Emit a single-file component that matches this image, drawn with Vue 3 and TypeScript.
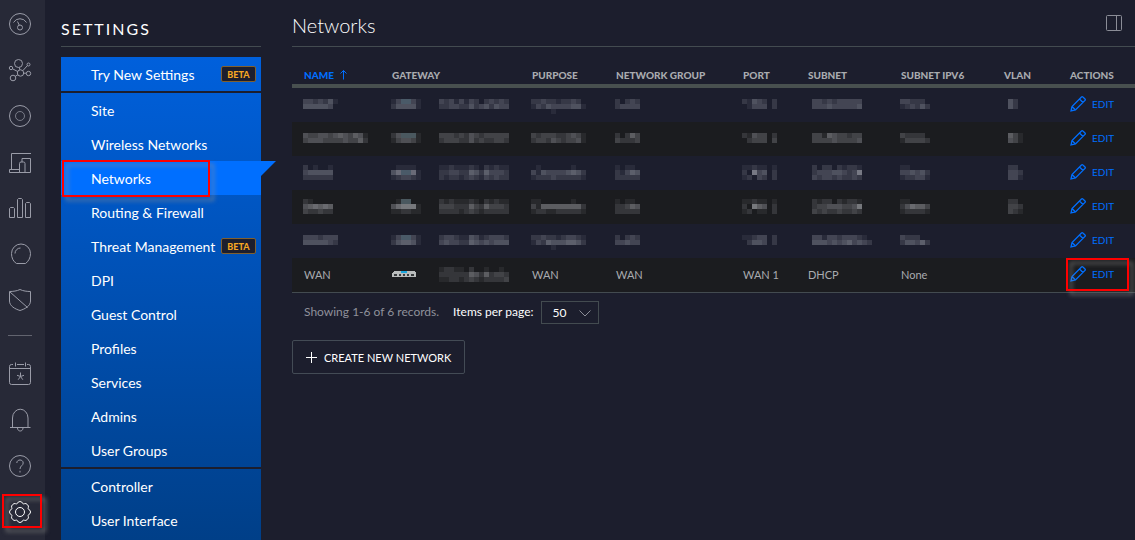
<script setup lang="ts">
import { ref } from 'vue'

interface MenuItem {
  label: string
  beta?: boolean
}

interface NetworkRow {
  name: string[]
  device: string[]
  address: string[]
  purpose: string[]
  group: string[]
  port: string[]
  subnet: string[]
  ipv6: string[]
  vlan: string[]
}

const active = ref('Networks')
const pageSize = ref('50')

const menu: MenuItem[][] = [
  [{ label: 'Try New Settings', beta: true }],
  [
    { label: 'Site' },
    { label: 'Wireless Networks' },
    { label: 'Networks' },
    { label: 'Routing & Firewall' },
    { label: 'Threat Management', beta: true },
    { label: 'DPI' },
    { label: 'Guest Control' },
    { label: 'Profiles' },
    { label: 'Services' },
    { label: 'Admins' },
    { label: 'User Groups' },
  ],
  [{ label: 'Controller' }, { label: 'User Interface' }],
]

const headings = ['Gateway', 'Purpose', 'Network Group', 'Port', 'Subnet', 'Subnet IPv6', 'VLAN', 'Actions']
const fields = ['purpose', 'group', 'port', 'subnet', 'ipv6', 'vlan'] as const

// Redacted values: each digit is the brightness of one block, "b" is a blue block.
const rows: NetworkRow[] = [
  {
    name: ['3323241', '4444430'],
    device: ['13bb31', '244441'],
    address: ['32313132023232', '22332242342433'],
    purpose: ['00000000000', '22322122320', '13243333441', '00001000000'],
    group: ['20232', '23333'],
    port: ['2143202', '0133302'],
    subnet: ['03323233333', '03334333334'],
    ipv6: ['332220', '123242'],
    vlan: ['042', '042'],
  },
  {
    name: ['4334434543541', '3444333343352'],
    device: ['24bbb1', '134431'],
    address: ['33323243233333', '23332242322332'],
    purpose: ['32333223431', '23324323341'],
    group: ['20253', '32223'],
    port: ['2143302', '0233303'],
    subnet: ['03315433233', '03333433334'],
    ipv6: ['322220', '133332'],
    vlan: ['0531', '0431'],
  },
  {
    name: ['201001', '344444', '222222'],
    device: ['011110', '46bb61', '123321'],
    address: ['11211121021211', '22332254253332', '21221232132322'],
    purpose: ['01000000100', '31433334542', '12223222221'],
    group: ['10110', '21354', '22222'],
    port: ['1121101', '2073402', '1203202'],
    subnet: ['02022021221', '02333443237', '03233232232'],
    ipv6: ['110000', '334342', '122331'],
    vlan: ['0220', '0332', '0331'],
  },
  {
    name: ['210000', '456565', '322322'],
    device: ['01bb00', '467771', '112211'],
    address: ['21211121021211', '33322253253332', '22221232122222'],
    purpose: ['11000000100', '31555555552', '12211222221'],
    group: ['10110', '22354', '22222'],
    port: ['1121101', '2075402', '1201102'],
    subnet: ['02122021221', '02334443347', '03232232232'],
    ipv6: ['110000', '246553', '122221'],
    vlan: ['0220', '0332', '0321'],
  },
  {
    name: ['3332333', '4444432'],
    device: ['13bb31', '245541'],
    address: ['23321143123332', '34332254343444'],
    purpose: ['00000000000', '22322123321', '13254445542', '00001000000'],
    group: ['20232', '33433'],
    port: ['1123302', '0244302'],
    subnet: ['0331332333210', '0444343453432'],
    ipv6: ['322200', '244352'],
    vlan: [],
  },
]
const wanAddress = ['12211020010010', '22222254252332', '11221232122223']
</script>

<template>
  <div class="app">
    <nav class="rail" aria-label="Main">
      <a href="#dashboard" aria-label="Dashboard">
        <svg viewBox="0 0 24 24"><circle cx="12" cy="12" r="10.5" /><path d="M5.5 10.5a7.5 7.5 0 0 1 13 0M9.5 9.5l1.8 3.8" /><circle cx="12" cy="15.5" r="2.5" /></svg>
      </a>
      <a href="#topology" aria-label="Topology">
        <svg viewBox="0 0 24 24"><circle cx="10.5" cy="5.5" r="4" /><circle cx="12.5" cy="15" r="3.2" /><circle cx="20.5" cy="15.5" r="2.2" /><circle cx="5" cy="20" r="2.8" /><circle cx="3" cy="10" r="1.7" /><circle cx="20.5" cy="6.5" r="1.5" /><path d="M11.3 9.4l.6 2.5M4.5 10.8l5.3 2.8M14.8 12.7l4.7-5.2M15.7 15.2h2.6M7.3 18.3l2.6-1.6" /></svg>
      </a>
      <a href="#map" aria-label="Map">
        <svg viewBox="0 0 24 24"><circle cx="12" cy="12" r="10.5" /><circle class="dim" cx="12" cy="12" r="4.5" /></svg>
      </a>
      <a href="#devices" aria-label="Devices">
        <svg viewBox="0 0 24 24"><path d="M3.500 19.500v-16h19.500M1.500 19.500h10v3h-10zM14 12V8.500h8.500v14h-5.500M11.500 13.500q0-1.500 1.500-1.500h2.500q1.500 0 1.500 1.500v9h-5.500z" /></svg>
      </a>
      <a href="#statistics" aria-label="Statistics">
        <svg viewBox="0 0 24 24"><path d="M1.500 21.500V12.500l1-1h3l1 1v9zM9.500 21.500V3.500l1-1h3l1 1v18zM17.500 21.500V7.500l1-1h3l1 1v14z" /></svg>
      </a>
      <a href="#insights" aria-label="Insights">
        <svg viewBox="0 0 24 24"><path d="M8.500 21.500C5 19.500 3.500 15.500 3.500 11.500a9.500 9.500 0 0 1 19 0c0 4-2 8-5 10zM7 11.500a5.500 5.500 0 0 1 5.500-5.500" /></svg>
      </a>
      <a href="#threats" aria-label="Threats">
        <svg viewBox="0 0 24 24"><path d="M12 1.500C9 3 5 3.500 1.500 3.500V13c0 5 5.500 8 10.500 9.500 5-1.500 10.500-4.500 10.500-9.500V3.500c-3.500 0-7.500-.5-10.500-2zM2 4l17.500 15.500" /></svg>
      </a>
      <hr />
      <a href="#events" aria-label="Events">
        <svg viewBox="0 0 24 24"><path d="M5 2.500H3.500q-2 0-2 2v16q0 2 2 2h17q2 0 2-2v-16q0-2-2-2H19M9 2.500h7M1.500 6.500h21M7.500.500v4M17.500.500v4M12.500 10.500v4M12.500 14.500l-3.500-1.200M12.500 14.500l3.500-1.200M12.500 14.500l-2.300 3.200M12.500 14.500l2.300 3.200" /></svg>
      </a>
      <a href="#alerts" aria-label="Alerts">
        <svg viewBox="0 0 24 24"><path d="M2 19.500h20.500M4.500 19.500V10a7.500 8.500 0 0 1 15.500 0v9.500M9.500 20c0 4 5.500 4 5.500 0" /></svg>
      </a>
      <a href="#help" aria-label="Help">
        <svg viewBox="0 0 24 24"><circle cx="12" cy="12" r="10.500" /><path d="M8.800 9c0-4 6.400-4 6.400 0 0 2.700-3.200 2.700-3.200 6M12 16.800v1.700" /></svg>
      </a>
      <a href="#settings" class="current" aria-label="Settings" aria-current="page">
        <svg viewBox="0 0 24 24"><path d="M9.500 3.300Q10 1.500 12 1.500T14.500 3.300Q15.200 4.200 16.400 3.700Q18 3 19.400 4.600Q21 6 20.300 7.600Q19.800 8.800 20.700 9.500Q22.500 10 22.500 12T20.700 14.500Q19.800 15.200 20.300 16.400Q21 18 19.400 19.400Q18 21 16.400 20.300Q15.200 19.800 14.500 20.700Q14 22.500 12 22.500T9.500 20.700Q8.800 19.800 7.600 20.300Q6 21 4.600 19.400Q3 18 3.700 16.400Q4.200 15.200 3.300 14.500Q1.500 14 1.500 12T3.300 9.500Q4.200 8.800 3.700 7.600Q3 6 4.600 4.600Q6 3 7.600 3.700Q8.800 4.200 9.500 3.300z" /><circle cx="12" cy="12" r="4.500" /></svg>
        <span class="mark mark-rail"></span>
      </a>
    </nav>

    <aside class="sidebar">
      <h2>SETTINGS</h2>
      <nav class="menu" aria-label="Settings">
        <ul v-for="(group, g) in menu" :key="g">
          <li v-for="item in group" :key="item.label">
            <a href="#" :class="{ active: item.label === active }" @click.prevent="active = item.label">
              {{ item.label }}<span v-if="item.beta" class="beta">BETA</span>
              <span v-if="item.label === 'Networks'" class="mark mark-menu"></span>
            </a>
          </li>
        </ul>
      </nav>
    </aside>

    <main>
      <header class="title">
        <h1>Networks</h1>
        <button type="button" aria-label="Toggle side panel">
          <svg viewBox="0 0 16 16"><rect x=".5" y=".5" width="15" height="15" rx="1" /><path d="M10.500.500v15" /></svg>
        </button>
      </header>

      <table>
        <colgroup>
          <col class="c-name" /><col class="c-device" /><col class="c-address" /><col class="c-purpose" /><col class="c-group" />
          <col class="c-port" /><col class="c-subnet" /><col class="c-ipv6" /><col class="c-vlan" /><col class="c-actions" />
        </colgroup>
        <thead>
          <tr>
            <th class="sorted" aria-sort="ascending">
              Name <svg class="arrow" viewBox="0 0 7 10"><path d="M3.500 9.500v-9M.5 3.500l3-3 3 3" /></svg>
            </th>
            <th v-for="(h, i) in headings" :key="h" :colspan="i === 0 ? 2 : 1">{{ h }}</th>
          </tr>
        </thead>
        <tbody>
          <tr v-for="(row, r) in rows" :key="r">
            <td v-for="field in (['name', 'device', 'address', ...fields] as (keyof NetworkRow)[])" :key="field">
              <svg
                v-if="row[field].length"
                class="mosaic"
                aria-hidden="true"
                :width="row[field][0].length * 5"
                :height="row[field].length * 5"
              >
                <template v-for="(line, y) in row[field]" :key="y">
                  <rect
                    v-for="(c, x) in line.split('')"
                    :key="x"
                    :x="x * 5"
                    :y="y * 5"
                    width="5"
                    height="5"
                    :class="{ blue: c === 'b' }"
                    :fill-opacity="c === 'b' ? 0.36 : Number(c) * 0.065"
                  />
                </template>
              </svg>
            </td>
            <td>
              <a href="#edit" class="edit">
                <svg viewBox="0 0 16 16"><path d="M1 15l1-4.500L11.500 1q.7-.7 1.400 0L15 3q.7.700 0 1.400L5.500 14zM2 10.500L5.500 14M9.500 3l3.500 3.500" /></svg>EDIT
              </a>
            </td>
          </tr>
          <tr>
            <td>WAN</td>
            <td>
              <svg class="device" viewBox="0 0 24 6" role="img" aria-label="Gateway">
                <path d="M2 0h20l2 2v4H0V2z" fill="#b9bcbc" />
                <path d="M9 0h6v2H9z" fill="#19a5dc" />
                <path d="M2 3h3v2H2zM7 3h2v2H7zM11 3h2v2h-2zM15 3h2v2h-2zM19 3h3v2h-3z" fill="#383b3d" />
              </svg>
            </td>
            <td>
              <svg class="mosaic" aria-hidden="true" width="70" height="15">
                <template v-for="(line, y) in wanAddress" :key="y">
                  <rect v-for="(c, x) in line.split('')" :key="x" :x="x * 5" :y="y * 5" width="5" height="5" :fill-opacity="Number(c) * 0.065" />
                </template>
              </svg>
            </td>
            <td>WAN</td>
            <td>WAN</td>
            <td>WAN 1</td>
            <td>DHCP</td>
            <td>None</td>
            <td></td>
            <td class="marked">
              <a href="#edit" class="edit">
                <svg viewBox="0 0 16 16"><path d="M1 15l1-4.500L11.500 1q.7-.7 1.400 0L15 3q.7.700 0 1.400L5.500 14zM2 10.500L5.500 14M9.500 3l3.500 3.500" /></svg>EDIT
              </a>
              <span class="mark mark-edit"></span>
            </td>
          </tr>
        </tbody>
      </table>

      <div class="pager">
        <span class="count">Showing 1-6 of 6 records.</span>
        <label for="page-size">Items per page:</label>
        <span class="select">
          <select id="page-size" v-model="pageSize">
            <option>50</option>
            <option>100</option>
          </select>
          <svg viewBox="0 0 12 7"><path d="M.5.500L6 6l5.500-5.500" /></svg>
        </span>
      </div>

      <button type="button" class="create">
        <svg viewBox="0 0 11 11"><path d="M5.500 0v11M0 5.500h11" /></svg>CREATE NEW NETWORK
      </button>
    </main>
  </div>
</template>

<style>
body {
  background: #1c1e2d;
}
</style>

<style scoped>
.app {
  display: flex;
  height: 100vh;
  overflow: hidden;
  background: #1c1e2d;
  color: #fff;
  font-family: Lato, "Open Sans", sans-serif;
}
a {
  color: inherit;
  text-decoration: none;
}
svg {
  display: block;
  fill: none;
  stroke: currentColor;
}
.mark {
  position: absolute;
  box-sizing: border-box;
  border: 2px solid #f00;
  filter: drop-shadow(4px 4px 2px rgba(145, 145, 140, 0.65));
  pointer-events: none;
}

.rail {
  flex: none;
  width: 45px;
  box-sizing: border-box;
  padding-top: 1px;
  background: #272937;
  color: #9a9ca8;
}
.rail a {
  position: relative;
  display: flex;
  align-items: center;
  height: 46px;
  padding-left: 8px;
}
.rail svg {
  width: 24px;
  height: 24px;
}
.rail .dim {
  opacity: 0.7;
}
.rail .current {
  color: #fff;
}
.rail hr {
  width: 24px;
  height: 1px;
  margin: 12px 0 15px 8px;
  border: 0;
  background: #62646f;
}
.mark-rail {
  left: 2px;
  top: 5px;
  width: 40px;
  height: 34px;
}

.sidebar {
  flex: none;
  display: flex;
  flex-direction: column;
  width: 200px;
  margin-left: 16px;
}
.sidebar h2 {
  margin: 0 0 10px;
  padding-top: 12px;
  border-bottom: 1px solid #434b50;
  font-size: 16px;
  font-weight: 400;
  line-height: 34px;
  letter-spacing: 2px;
}
.menu {
  flex: 1;
  background: linear-gradient(#0060dc, #003f88);
}
.menu ul {
  margin: 0;
  padding: 0;
  list-style: none;
}
.menu ul + ul {
  border-top: 2px solid #1c1e2d;
}
.menu a {
  position: relative;
  display: flex;
  align-items: center;
  justify-content: space-between;
  height: 34px;
  padding: 0 5px 0 30px;
  box-sizing: border-box;
  font-size: 14px;
  white-space: nowrap;
}
.menu .active {
  background: #006fff;
}
.menu .active::after {
  content: "";
  position: absolute;
  left: 100%;
  top: 0;
  border-top: 15px solid #006fff;
  border-right: 15px solid transparent;
}
.beta {
  box-sizing: border-box;
  width: 35px;
  height: 16px;
  margin-bottom: 1px;
  border: 1px solid #80602f;
  border-radius: 2px;
  background: #1c1e2d;
  color: #f5a623;
  font-size: 9px;
  font-weight: 900;
  line-height: 15px;
  text-align: center;
}
.mark-menu {
  left: 1px;
  top: -1px;
  width: 148px;
  height: 37px;
}

main {
  flex: 1;
  min-width: 0;
  margin-left: 31px;
}
.title {
  display: flex;
  align-items: center;
  justify-content: space-between;
  height: 46px;
  padding-right: 13px;
  border-bottom: 1px solid #434b50;
}
.title h1 {
  margin: 4px 0 0;
  font-size: 20px;
  font-weight: 300;
  line-height: 24px;
}
.title button {
  padding: 0;
  border: 0;
  background: none;
  color: #8b8d97;
}
.title button svg {
  width: 16px;
  height: 16px;
}

table {
  width: 100%;
  table-layout: fixed;
  border-collapse: separate;
  border-spacing: 0;
  border-bottom: 1px solid #434b50;
  color: #a9abaf;
  font-size: 11px;
}
.c-name { width: 88px; }
.c-device { width: 48px; }
.c-address { width: 92px; }
.c-purpose { width: 84px; }
.c-group { width: 127px; }
.c-port { width: 65px; }
.c-subnet { width: 93px; }
.c-ipv6 { width: 103px; }
.c-vlan { width: 66px; }
.c-actions { width: 77px; }
th {
  height: 41px;
  padding: 20px 0 0 12px;
  box-sizing: border-box;
  border-bottom: 4px solid #48504f;
  font-size: 10px;
  font-weight: 900;
  line-height: 17px;
  text-align: left;
  text-transform: uppercase;
  white-space: nowrap;
  vertical-align: top;
}
th.sorted {
  color: #006fff;
}
.arrow {
  display: inline-block;
  width: 7px;
  height: 10px;
  margin-left: 4px;
  vertical-align: -1px;
}
td {
  height: 34px;
  box-sizing: border-box;
  padding: 0 0 2px 12px;
  white-space: nowrap;
}
tbody tr:nth-child(even) {
  background: #1b1c1f;
}
.mosaic {
  margin-left: -1px;
  fill: #e4e6ee;
  stroke: none;
  shape-rendering: crispEdges;
}
.mosaic .blue {
  fill: #9fc4d4;
}
.device {
  width: 24px;
  height: 6px;
  stroke: none;
  shape-rendering: crispEdges;
}
.marked {
  position: relative;
}
.edit {
  display: flex;
  align-items: center;
  gap: 6px;
  color: #006fff;
  font-size: 10px;
}
.edit svg {
  width: 16px;
  height: 16px;
  stroke-width: 1.3;
}
.mark-edit {
  left: 8px;
  top: 0;
  width: 63px;
  height: 33px;
}

.pager {
  display: flex;
  align-items: center;
  height: 39px;
  padding-left: 12px;
  font-size: 12px;
}
.count,
.pager label {
  padding-bottom: 3px;
}
.count {
  margin-right: 14px;
  color: #8f919b;
}
.pager label {
  margin-right: 8px;
}
.select {
  position: relative;
}
.select select {
  display: block;
  width: 58px;
  height: 23px;
  padding: 0 10px;
  border: 1px solid #434b50;
  border-radius: 0;
  appearance: none;
  background: none;
  color: #fff;
  font: 12px Lato, sans-serif;
}
.select svg {
  position: absolute;
  right: 8px;
  top: 9px;
  width: 12px;
  height: 7px;
  color: #8b8d97;
  pointer-events: none;
}
.create {
  display: flex;
  align-items: center;
  gap: 7px;
  height: 34px;
  margin-top: 8px;
  padding: 0 13px;
  border: 1px solid #434b55;
  border-radius: 2px;
  background: none;
  color: #fff;
  font: 11px Lato, sans-serif;
}
.create svg {
  width: 11px;
  height: 11px;
}
</style>
